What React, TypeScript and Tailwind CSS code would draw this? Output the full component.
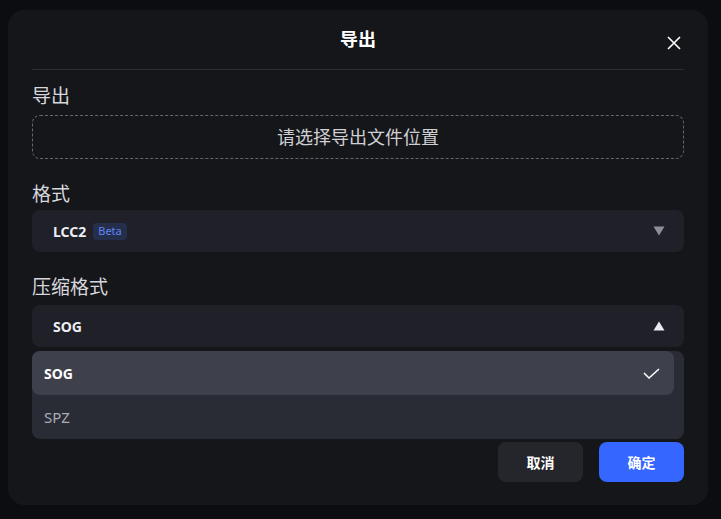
import React, { useState } from 'react';

const FONT = { fontFamily: '"Noto Sans", "Noto Sans CJK SC", sans-serif' };

const compressionOptions = ['SOG', 'SPZ'];

const Caret = ({ up, className }: { up?: boolean; className: string }) => (
  <svg width="12" height="10" viewBox="0 0 12 10" className={className}>
    {up ? <path d="M6 0.5 L11.5 9.5 H0.5 Z" fill="currentColor" /> : <path d="M0.5 0.5 H11.5 L6 9.5 Z" fill="currentColor" />}
  </svg>
);

const FieldLabel = ({ children }: { children: React.ReactNode }) => (
  <div className="h-7 text-[19px] leading-7 text-[#d6d7dc]">{children}</div>
);

const App = () => {
  const [compression, setCompression] = useState('SOG');
  const [menuOpen, setMenuOpen] = useState(true);

  return (
    <div className="h-[519px] w-full overflow-hidden bg-[#0b0d10] pt-[10px] pl-2" style={FONT}>
      <div className="flex w-[700px] flex-col rounded-2xl bg-[#15161a] px-6 pb-[23px]">
        {/* header */}
        <div className="relative flex h-[60px] items-center justify-center border-b border-[#2c2d33]">
          <span className="text-[18px] font-bold text-white">导出</span>
          <button className="absolute right-[3px] top-[26px] text-white">
            <svg width="14" height="14" viewBox="0 0 14 14" fill="none" stroke="currentColor" strokeWidth="1.6">
              <path d="M1 1 L13 13 M13 1 L1 13" />
            </svg>
          </button>
        </div>

        {/* export location */}
        <div className="mt-3">
          <FieldLabel>导出</FieldLabel>
          <div className="mt-[5px] flex h-11 items-center justify-center rounded-lg border border-dashed border-[#66676d] text-[18px] text-[#cfd0d4]">
            请选择导出文件位置
          </div>
        </div>

        {/* format */}
        <div className="mt-[21px]">
          <FieldLabel>格式</FieldLabel>
          <div className="mt-[2px] flex h-[42px] items-center justify-between rounded-lg bg-[#1f2028] pl-[21px] pr-[19px]">
            <div className="flex items-center gap-[7px]">
              <span className="text-[14px] font-bold text-[#eceef4]">LCC2</span>
              <span className="flex h-[17px] items-center rounded bg-[#252e4b] px-[5px] text-[11px] text-[#5f86f6]">Beta</span>
            </div>
            <Caret className="text-[#8d8e95]" />
          </div>
        </div>

        {/* compression */}
        <div className="relative mt-[21px]">
          <FieldLabel>压缩格式</FieldLabel>
          <div
            className="mt-1 flex h-[42px] cursor-pointer items-center justify-between rounded-lg bg-[#1f2028] pl-[21px] pr-[19px]"
            onClick={() => setMenuOpen(!menuOpen)}
          >
            <span className="text-[14px] font-bold text-[#eceef4]">{compression}</span>
            <Caret up={menuOpen} className="text-[#e8eaf6]" />
          </div>

          {menuOpen && (
            <div className="absolute left-0 right-0 top-[78px] z-10 rounded-lg bg-[#2a2c35] pr-[10px]">
              {compressionOptions.map(option => {
                const selected = option === compression;
                return (
                  <div
                    key={option}
                    className={`flex h-11 cursor-pointer items-center justify-between rounded-lg pl-3 pr-[14px] ${
                      selected ? 'bg-[#3e404c] text-[14px] font-bold text-white' : 'text-[15px] text-[#a9abb5]'
                    }`}
                    onClick={() => {
                      setCompression(option);
                      setMenuOpen(false);
                    }}
                  >
                    <span>{option}</span>
                    {selected && (
                      <svg width="17" height="11" viewBox="0 0 17 11" fill="none" stroke="white" strokeWidth="1.5">
                        <path d="M1 5 L6 10 L16 1" />
                      </svg>
                    )}
                  </div>
                );
              })}
            </div>
          )}
        </div>

        {/* footer */}
        <div className="mt-[95px] flex justify-end gap-4">
          <button className="h-10 w-[85px] rounded-lg bg-[#25262c] text-[14px] font-bold text-white">取消</button>
          <button className="h-10 w-[85px] rounded-lg bg-[#3566ff] text-[14px] font-bold text-white">确定</button>
        </div>
      </div>
    </div>
  );
};

export default App;
